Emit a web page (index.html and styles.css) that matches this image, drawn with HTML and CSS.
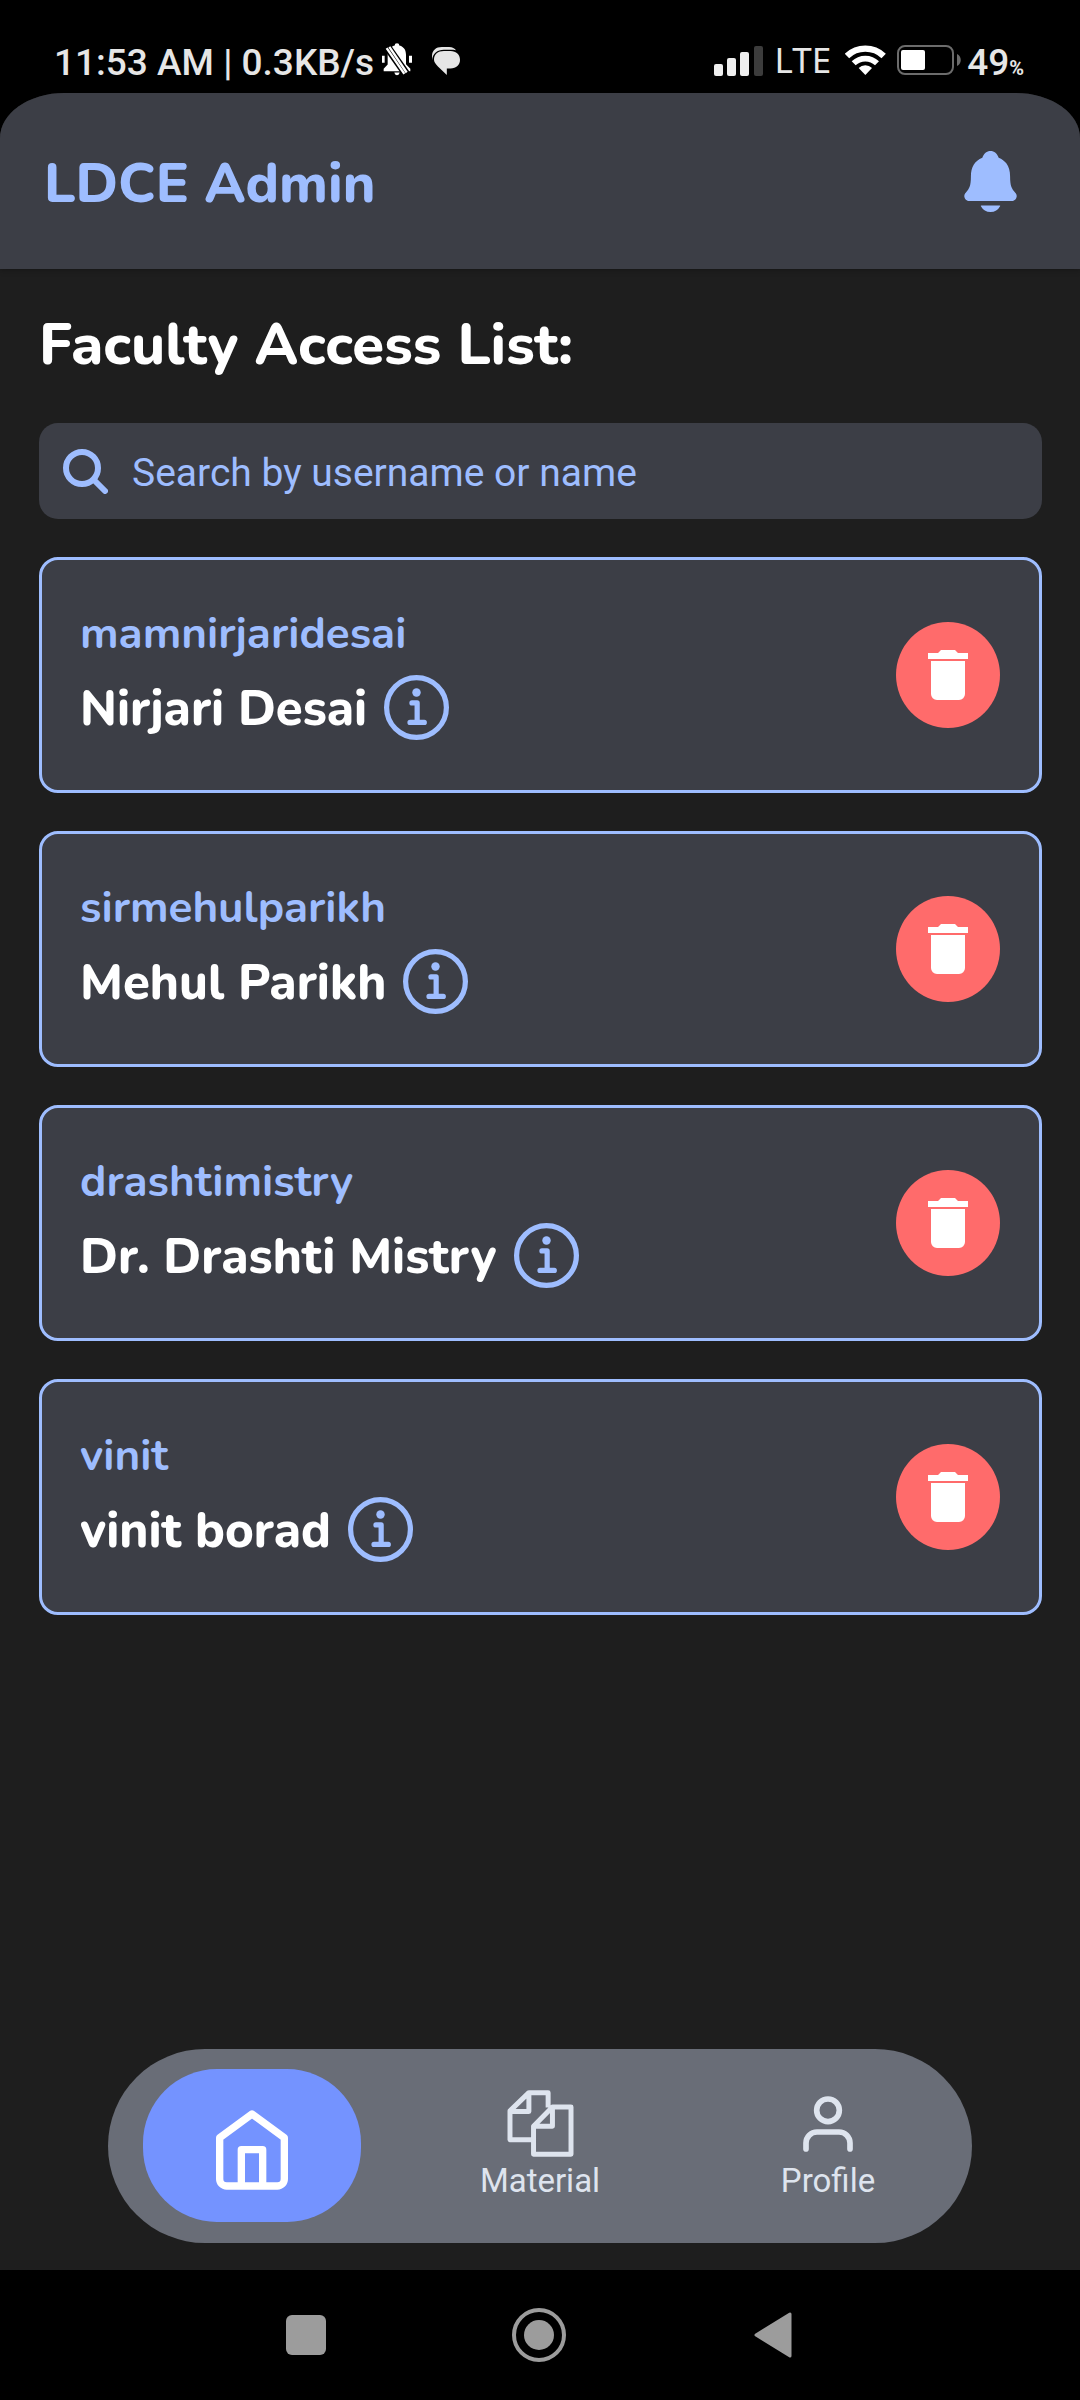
FILE: index.html
```html
<!DOCTYPE html>
<html lang="en">
<head>
<meta charset="utf-8">
<meta name="viewport" content="width=device-width, initial-scale=1">
<title>LDCE Admin</title>
<link rel="stylesheet" href="styles.css">
</head>
<body>
<svg class="symbols" aria-hidden="true">
  <symbol id="info" viewBox="48 48 400 400">
    <g fill="none" stroke="currentColor" stroke-width="32" stroke-linecap="round" stroke-linejoin="round">
      <circle cx="248" cy="248" r="184"/>
      <path d="M220 220h32v116M208 340h88"/>
    </g>
    <circle cx="248" cy="156" r="26" fill="currentColor"/>
  </symbol>
  <symbol id="trash" viewBox="0 0 40 50">
    <path fill="currentColor" d="M0 3h10l3-3h14l3 3h10v6H0zM3 11h34v33a6 6 0 0 1-6 6H9a6 6 0 0 1-6-6z"/>
  </symbol>
</svg>

<div class="status">
  <div class="status-left">
    <span>11:53 AM | 0.3KB/s</span>
    <svg class="muted" viewBox="36 38 90 104" aria-hidden="true">
      <path fill="#fff" d="M74 45a7 7 0 0 1 14 0c15 4 20 15 20 28v28l13 14v7H41v-7l12-13V73c0-13 7-24 21-28zM36 76h8v21h-8zM117 76h9v21h-9zM73 126h16q-1 8-8 8t-8-8z"/>
      <path stroke="#000" stroke-width="24" d="M48 44l66 94"/>
      <path stroke="#fff" stroke-width="7" d="M50 53l53 77M58 49l52 77"/>
    </svg>
    <svg class="chat" viewBox="186 50 85 85" aria-hidden="true">
      <path fill="#e6e6e6" d="M186 90V78c0-18 12-28 30-28h22c10 0 17 4 21 10-6-2-10-2-17-2h-20c-20 0-34 12-36 32z"/>
      <path fill="#e6e6e6" d="M222 62h20c18 0 29 11 29 27s-11 26-29 26h-11v20l-27-26c-8-8-12-14-12-21 0-16 12-26 30-26z"/>
    </svg>
  </div>
  <div class="status-right">
    <svg class="signal" viewBox="0 0 49 30" aria-hidden="true">
      <g fill="#efefef"><rect y="18" width="9" height="12" rx="2"/><rect x="13" y="12" width="9" height="18" rx="2"/><rect x="26" y="6" width="9" height="24" rx="2"/></g>
      <rect x="40" width="9" height="30" rx="2" fill="#3c3c3c"/>
    </svg>
    <span class="network">LTE</span>
    <svg class="wifi" viewBox="429 45 123 90" aria-hidden="true">
      <g fill="none" stroke="#fff"><path stroke-width="19" d="M435 78a80 80 0 0 1 110 0"/><path stroke-width="17" d="M455 100a50 50 0 0 1 70 0"/></g>
      <path fill="#fff" d="M490 135l-20-21a28 28 0 0 1 40 0z"/>
    </svg>
    <svg class="battery" viewBox="0 0 64 30" aria-hidden="true">
      <rect x="1" y="1" width="55" height="28" rx="7" fill="none" stroke="#6c6c6c" stroke-width="2"/>
      <rect x="4" y="5" width="24" height="20" rx="2" fill="#fff"/>
      <path fill="#6c6c6c" d="M60 9c5 2 5 10 0 12z"/>
    </svg>
    <span class="level">49<small>%</small></span>
  </div>
</div>

<div class="app">
  <header class="header">
    <h1>LDCE Admin</h1>
    <button class="bell" aria-label="Notifications">
      <svg viewBox="64 32 384 448" aria-hidden="true"><path fill="currentColor" d="M440.08 341.31c-1.66-2-3.29-4-4.89-5.93-22-26.61-35.31-42.67-35.31-118 0-39-9.33-71-27.72-95-13.56-17.73-31.89-31.18-56.05-41.12a3 3 0 0 1-.82-.67C306.6 51.49 282.82 32 256 32s-50.59 19.49-59.28 48.56a3.13 3.13 0 0 1-.81.65c-56.38 23.21-83.78 67.74-83.78 136.14 0 75.36-13.29 91.42-35.31 118-1.6 1.93-3.23 3.89-4.89 5.93a35.16 35.16 0 0 0-4.65 37.62c6.17 13 19.32 21.07 34.33 21.07H410.5c14.94 0 28-8.06 34.19-21a35.17 35.17 0 0 0-4.61-37.66zM256 480a80.06 80.06 0 0 0 70.44-42.13 4 4 0 0 0-3.54-5.87H189.12a4 4 0 0 0-3.55 5.87A80.06 80.06 0 0 0 256 480z"/></svg>
    </button>
  </header>

  <main class="content">
    <h2>Faculty Access List:</h2>
    <label class="search">
      <svg viewBox="0 0 46 46" fill="none" stroke="currentColor" stroke-width="6" stroke-linecap="round" aria-hidden="true"><circle cx="20" cy="20" r="16"/><path d="M32 32l11 11"/></svg>
      <input type="text" placeholder="Search by username or name" aria-label="Search by username or name">
    </label>

    <article class="card">
      <div class="person">
        <p class="username">mamnirjaridesai</p>
        <div class="name"><h3>Nirjari Desai</h3><button class="info" aria-label="About Nirjari Desai"><svg><use href="#info"/></svg></button></div>
      </div>
      <button class="delete" aria-label="Delete Nirjari Desai"><svg><use href="#trash"/></svg></button>
    </article>
    <article class="card">
      <div class="person">
        <p class="username">sirmehulparikh</p>
        <div class="name"><h3>Mehul Parikh</h3><button class="info" aria-label="About Mehul Parikh"><svg><use href="#info"/></svg></button></div>
      </div>
      <button class="delete" aria-label="Delete Mehul Parikh"><svg><use href="#trash"/></svg></button>
    </article>
    <article class="card">
      <div class="person">
        <p class="username">drashtimistry</p>
        <div class="name"><h3>Dr. Drashti Mistry</h3><button class="info" aria-label="About Dr. Drashti Mistry"><svg><use href="#info"/></svg></button></div>
      </div>
      <button class="delete" aria-label="Delete Dr. Drashti Mistry"><svg><use href="#trash"/></svg></button>
    </article>
    <article class="card">
      <div class="person">
        <p class="username">vinit</p>
        <div class="name"><h3>vinit borad</h3><button class="info" aria-label="About vinit borad"><svg><use href="#info"/></svg></button></div>
      </div>
      <button class="delete" aria-label="Delete vinit borad"><svg><use href="#trash"/></svg></button>
    </article>
  </main>

  <nav class="tabs">
    <a class="tab active" href="#home" aria-label="Home">
      <svg class="home" viewBox="408 270 216 240" fill="none" stroke="currentColor" stroke-width="22" stroke-linecap="round" stroke-linejoin="round" aria-hidden="true"><path d="M419 353l97-71 97 71v124a21 21 0 0 1-21 21H440a21 21 0 0 1-21-21zM484 498V389h64v109"/></svg>
    </a>
    <a class="tab" href="#material">
      <span class="tab-icon"><svg class="material" viewBox="1280 209 200 202" fill="none" stroke="currentColor" stroke-width="15" stroke-linejoin="round" aria-hidden="true"><path d="M1403 262v-45h-58l-57 55v87h68M1345 217v57h-57M1416 260h56v143h-113v-85zv58h-57"/></svg></span>
      <span>Material</span>
    </a>
    <a class="tab" href="#profile">
      <span class="tab-icon"><svg class="profile" viewBox="729 226 150 168" fill="none" stroke="currentColor" stroke-width="17" stroke-linecap="round" aria-hidden="true"><circle cx="804" cy="269" r="34"/><path d="M738 385v-18a33 33 0 0 1 33-33h66a33 33 0 0 1 33 33v18"/></svg></span>
      <span>Profile</span>
    </a>
  </nav>
</div>

<div class="system">
  <button aria-label="Recent apps"><svg viewBox="0 0 54 54" aria-hidden="true"><rect x="7" y="7" width="40" height="40" rx="6" fill="currentColor"/></svg></button>
  <button aria-label="Home screen"><svg viewBox="0 0 54 54" aria-hidden="true"><circle cx="27" cy="27" r="25" fill="none" stroke="currentColor" stroke-width="4"/><circle cx="27" cy="27" r="15" fill="currentColor"/></svg></button>
  <button aria-label="Back"><svg viewBox="0 0 54 54" aria-hidden="true"><path d="M11 27L45 6v42z" fill="currentColor" stroke="currentColor" stroke-width="3" stroke-linejoin="round"/></svg></button>
</div>
</body>
</html>
```
FILE: styles.css
```css
:root {
  --accent: #9ebdff;
  --surface: #3c3e46;
  --page: #1e1e1e;
  --rounded: Nunito, "Open Sans", sans-serif;
  --plain: Roboto, "Noto Sans", sans-serif;
}

* { box-sizing: border-box; }

body {
  margin: 0;
  min-height: 100vh;
  display: flex;
  flex-direction: column;
  background: #000;
  color: #fff;
  font-family: var(--plain);
}

h1, h2, h3, p { margin: 0; }
svg { display: block; }

button {
  padding: 0;
  border: 0;
  background: none;
  color: inherit;
  cursor: pointer;
}

.symbols { display: none; }

/* phone status bar */
.status {
  display: flex;
  justify-content: space-between;
  padding: 31px 56px 0 54px;
  height: 93px;
  color: #e6e6e6;
  font-size: 37px;
  font-weight: 500;
}
.status-left, .status-right { display: flex; align-items: center; }
.muted { width: 30px; height: 35px; margin: 0 20px 4px 8px; }
.chat { width: 28px; height: 28px; margin-bottom: 2px; }
.signal { width: 49px; height: 30px; margin-bottom: 2px; }
.network { margin: 0 14px 4px 12px; font: 400 35px/40px "Noto Sans", sans-serif; }
.wifi { width: 41px; height: 30px; margin: 0 11px 4px 0; }
.battery { width: 64px; height: 30px; margin: 0 6px 4px 0; }
.level small { font-size: 20px; font-weight: 700; }

/* application */
.app {
  flex: 1;
  display: flex;
  flex-direction: column;
  overflow: hidden;
  border-radius: 64px 64px 0 0 / 45px 45px 0 0;
  background: var(--page);
}
.header {
  display: flex;
  align-items: center;
  justify-content: space-between;
  height: 176px;
  padding: 0 63px 0 44px;
  background: var(--surface);
  box-shadow: 0 1px 6px rgba(0, 0, 0, 0.3);
  color: var(--accent);
}
h1 { padding-top: 6px; font: 800 55px/80px var(--rounded); }
.bell svg { width: 53px; height: 61px; }

.content {
  flex: 1;
  display: flex;
  flex-direction: column;
  gap: 38px;
  padding: 36px 38px 38px 39px;
}
h2 { font: 800 58px/80px var(--rounded); }

.search {
  display: flex;
  align-items: center;
  gap: 24px;
  height: 96px;
  padding: 0 23px;
  border-radius: 19px;
  background: var(--surface);
  color: var(--accent);
}
.search svg { flex: none; width: 46px; height: 46px; }
.search input {
  flex: 1;
  min-width: 0;
  padding: 3px 0 0;
  border: 0;
  outline: 0;
  background: none;
  color: inherit;
  font: 400 39px/48px var(--plain);
}
.search input::placeholder { color: inherit; opacity: 1; }

.card {
  display: flex;
  align-items: center;
  justify-content: space-between;
  padding: 43px 39px 43px 38px;
  border: 3px solid var(--accent);
  border-radius: 19px;
  background: var(--surface);
}
.person { display: grid; gap: 11px; padding: 1px 0 7px; }
.username { color: var(--accent); font: 700 44px/60px var(--rounded); }
.name { display: flex; align-items: center; gap: 17px; height: 65px; }
h3 { padding-top: 2px; font: 800 49px/68px var(--rounded); }
.info { color: var(--accent); }
.info svg { width: 65px; height: 65px; }
.delete {
  display: grid;
  place-items: center;
  flex: none;
  width: 104px;
  height: 106px;
  border-radius: 50%;
  background: #ff6b6b;
}
.delete svg { width: 40px; height: 50px; }

.tabs {
  display: grid;
  grid-template-columns: repeat(3, 1fr);
  justify-items: center;
  width: 80%;
  margin: 0 auto 27px;
  padding: 20px 0 21px;
  border-radius: 97px;
  background: #696d77;
}
.tab {
  display: flex;
  flex-direction: column;
  align-items: center;
  width: 76%;
  height: 153px;
  padding-top: 20px;
  border-radius: 74px;
  color: #dee4ee;
  font-size: 33px;
  line-height: 46px;
  text-decoration: none;
}
.tab.active { padding-top: 41px; background: #7493ff; color: #fff; }
.tab-icon { display: grid; place-items: center; height: 69px; }
.home { width: 72px; height: 80px; }
.material { width: 67px; height: 67px; }
.profile { width: 50px; height: 56px; }

/* phone navigation keys */
.system {
  display: flex;
  align-items: center;
  justify-content: center;
  gap: 179px;
  height: 130px;
  padding-right: 2px;
  color: #9c9c9c;
}
.system svg { width: 54px; height: 54px; }
```
